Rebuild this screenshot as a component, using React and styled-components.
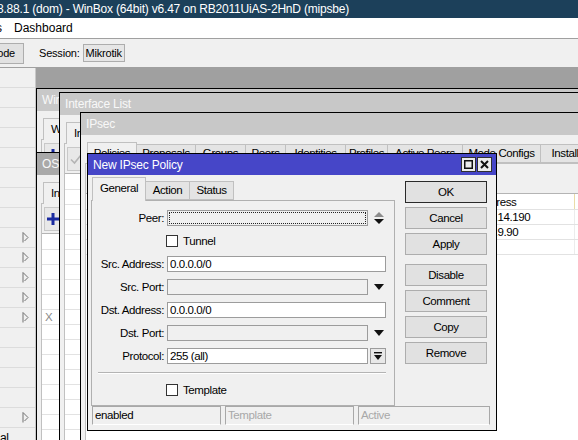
import React from 'react'
import styled, { createGlobalStyle } from 'styled-components'

const GlobalStyle = createGlobalStyle`
  html, body { margin: 0; padding: 0; background: #fff; }
  * { box-sizing: border-box; }
`

const Screen = styled.div`
  width: 578px;
  height: 440px;
  overflow: hidden;
  display: flex;
  flex-direction: column;
  background: #f0f0f0;
  font-family: "Liberation Sans", Arial, sans-serif;
  font-size: 11.5px;
  letter-spacing: -0.4px;
  color: #000;
`

const AppTitle = styled.div`
  flex: none;
  height: 18px;
  background: #1c405a;
  color: #fff;
  font-size: 12px;
  letter-spacing: -0.2px;
  line-height: 18px;
  white-space: nowrap;
  overflow: hidden;
  text-indent: -3px;
`

const MenuBar = styled.div`
  flex: none;
  height: 21px;
  display: flex;
  align-items: center;
  gap: 12px;
  background: #fff;
  border-bottom: 1px solid #a0a0a0;
  font-size: 12px;
  letter-spacing: 0;
  white-space: nowrap;
  overflow: hidden;
`

const MenuItem = styled.span`
  margin-left: ${p => p.$shift || 0}px;
`

const ToolBar = styled.div`
  flex: none;
  height: 29px;
  display: flex;
  align-items: center;
  background: #f0f0f0;
  border-bottom: 1px solid #a0a0a0;
  font-size: 11px;
  letter-spacing: -0.2px;
  white-space: nowrap;
  overflow: hidden;
`

const ModeButton = styled.div`
  flex: none;
  width: 64px;
  height: 21px;
  margin-left: -40px;
  padding-right: 8px;
  text-align: right;
  line-height: 19px;
  background: #e1e1e1;
  border: 1px solid #adadad;
`

const SessionLabel = styled.span`
  margin-left: 15px;
`

const SessionBox = styled.span`
  margin-left: 3px;
  height: 18px;
  line-height: 16px;
  padding: 0 2px;
  background: #e6e6e6;
  border: 1px solid #adadad;
`

const Main = styled.div`
  flex: 1;
  min-height: 0;
  display: flex;
`

const Sidebar = styled.div`
  flex: none;
  width: 36px;
  background: #f0f0f0;
  border-right: 1px solid #c8c8c8;
  overflow: hidden;
`

const SideRow = styled.div`
  height: 20px;
  display: flex;
  align-items: center;
  padding-left: ${p => (p.$text ? 0 : 22)}px;
  border-bottom: 1px solid #dcdcdc;
  font-size: 12px;
  white-space: nowrap;
`

const Workspace = styled.div`
  flex: 1;
  position: relative;
  overflow: hidden;
  background: #a0a0a0;
`

const Window = styled.div`
  position: absolute;
  z-index: 0;
  left: ${p => p.$x}px;
  top: ${p => p.$y}px;
  width: ${p => p.$w}px;
  height: ${p => p.$h}px;
  display: flex;
  flex-direction: column;
  background: #f0f0f0;
  border: 1px solid #000;
`

const WinTitle = styled.div`
  flex: none;
  height: 22px;
  padding-left: 5px;
  line-height: 22px;
  font-size: 12px;
  letter-spacing: -0.2px;
  color: #f8f8f8;
  background: ${p => (p.$dark ? '#a9a9a9' : '#c8c8c8')};
  white-space: nowrap;
`

const WinBody = styled.div`
  flex: 1;
  min-height: 0;
  display: flex;
  flex-direction: column;
  padding: 6px 4px 0;
`

const TabRow = styled.div`
  flex: none;
  height: ${p => p.$h || 22}px;
  display: flex;
  align-items: flex-end;
  padding-left: ${p => p.$pad ?? 2}px;
  white-space: nowrap;
`

const Tab = styled.div`
  flex: none;
  position: relative;
  height: ${p => (p.$active ? p.$tall || 22 : 19)}px;
  width: ${p => (p.$w ? `${p.$w}px` : 'auto')};
  padding: 0 ${p => (p.$w ? 0 : 7)}px;
  margin-right: -1px;
  margin-bottom: ${p => (p.$active ? -1 : 0)}px;
  z-index: ${p => (p.$active ? 1 : 0)};
  text-align: center;
  line-height: ${p => (p.$active ? 20 : 17)}px;
  background: ${p => (p.$active ? '#f0f0f0' : '#e4e4e4')};
  border: 1px solid #c0c0c0;
  border-bottom: ${p => (p.$active ? 'none' : '1px solid #c0c0c0')};
`

const TabPanel = styled.div`
  flex: 1;
  min-height: 0;
  display: flex;
  flex-direction: column;
  border: 1px solid #c0c0c0;
  border-bottom: none;
`

const PanelTools = styled.div`
  flex: none;
  height: 29px;
  display: flex;
  align-items: center;
  padding: 0 2px;
`

const ToolButton = styled.div`
  width: 18px;
  height: 24px;
  display: flex;
  align-items: center;
  justify-content: center;
  border: 1px solid #c8c8c8;
  background: #e8e8e8;
`

const DataTable = styled.div`
  flex: 1;
  background: #fff;
  border-top: 1px solid #b4b4b4;
`

const TableRow = styled.div`
  display: grid;
  grid-template-columns: ${p => p.$cols};
  height: ${p => (p.$head ? 16 : 15)}px;
  border-bottom: 1px solid #e2e2e2;
  white-space: nowrap;
`

const Cell = styled.div`
  overflow: hidden;
  padding-left: 3px;
  line-height: ${p => (p.$head ? 16 : 15)}px;
  color: ${p => (p.$muted ? '#8a8a8a' : '#000')};
  border-right: 1px solid ${p => (p.$head ? '#eadca8' : '#ececec')};
`

const Dialog = styled.div`
  position: absolute;
  left: 51px;
  top: 85px;
  width: 410px;
  height: 278px;
  display: flex;
  flex-direction: column;
  background: #f0f0f0;
  border: 1px solid #000;
  z-index: 5;
`

const DlgTitle = styled.div`
  flex: none;
  height: 21px;
  display: flex;
  align-items: center;
  justify-content: space-between;
  padding: 0 4px 0 5px;
  background: #4646c8;
  color: #fff;
  font-size: 12px;
  letter-spacing: -0.2px;
`

const TitleButtons = styled.div`
  display: flex;
  gap: 1px;
`

const TitleBtn = styled.div`
  width: 15px;
  height: 15px;
  display: flex;
  align-items: center;
  justify-content: center;
  background: #ececec;
  border: 1px solid #303030;
`

const DlgBody = styled.div`
  flex: 1;
  min-height: 0;
  display: flex;
  flex-direction: column;
  padding: 2px 3px 6px;
`

const DlgMain = styled.div`
  flex: 1;
  min-height: 0;
  display: flex;
  gap: 10px;
`

const LeftCol = styled.div`
  flex: none;
  width: 304px;
  display: flex;
  flex-direction: column;
`

const FormPanel = styled.div`
  flex: 1;
  padding: 9px 8px 0 0;
  border: 1px solid #b0b0b0;
  background: #f0f0f0;
`

const FormRow = styled.div`
  display: grid;
  grid-template-columns: 72px 1fr;
  column-gap: 3px;
  align-items: center;
  height: 16px;
  margin-bottom: 7px;
`

const Label = styled.div`
  text-align: right;
  white-space: nowrap;
`

const FieldLine = styled.div`
  display: flex;
  align-items: center;
  height: 16px;
`

const Input = styled.div`
  position: relative;
  flex: 1;
  height: 16px;
  padding-left: 2px;
  line-height: 14px;
  white-space: nowrap;
  background: ${p => (p.$disabled ? '#f0f0f0' : '#fff')};
  border: 1px solid #9c9c9c;

  ${p => p.$focus && `
    &::after {
      content: '';
      position: absolute;
      inset: 1px;
      border: 1px dotted #222;
    }
  `}
`

const ArrowSlot = styled.div`
  flex: none;
  width: 18px;
  display: flex;
  align-items: center;
  justify-content: flex-end;
  padding-right: 2px;
`

const ProtoBtn = styled.div`
  flex: none;
  width: 16px;
  height: 16px;
  margin-left: 2px;
  display: flex;
  align-items: center;
  justify-content: center;
  background: #e8e8e8;
  border: 1px solid #9c9c9c;
`

const CheckBox = styled.span`
  flex: none;
  width: 12px;
  height: 12px;
  margin-left: -1px;
  margin-right: 5px;
  background: #fff;
  border: 1px solid #333;
`

const Separator = styled.div`
  height: 2px;
  margin: 8px 0 8px 6px;
  border-top: 1px solid #b4b4b4;
  border-bottom: 1px solid #fff;
`

const ButtonCol = styled.div`
  flex: none;
  width: 82px;
  display: flex;
  flex-direction: column;
  gap: 4px;
  padding-top: 4px;
`

const DlgButton = styled.div`
  height: 22px;
  margin-top: ${p => (p.$gapTop ? 5 : 0)}px;
  text-align: center;
  line-height: 20px;
  background: #e1e1e1;
  border: 1px solid ${p => (p.$default ? '#2a2a2a' : '#adadad')};
`

const StatusBar = styled.div`
  flex: none;
  height: 18px;
  margin: 2px 3px 0 1px;
  display: grid;
  grid-template-columns: 129px 129px 1fr;
  gap: 4px;
`

const StatusCell = styled.div`
  padding-left: 2px;
  line-height: 17px;
  color: ${p => (p.$muted ? '#a8a8a8' : '#000')};
  border: 1px solid #a8a8a8;
  border-bottom-color: #fff;
`

const SideArrow = () => (
  <svg width="7" height="11" viewBox="0 0 7 11">
    <path d="M1 0.5 V10.5 M1 0.5 L6 5.5 L2.5 9" fill="none" stroke="#707070" strokeWidth="1" />
  </svg>
)

const PlusIcon = () => (
  <svg width="12" height="12" viewBox="0 0 12 12">
    <rect x="4.5" y="0" width="3" height="12" fill="#1a2ba0" />
    <rect x="0" y="4.5" width="12" height="3" fill="#1a2ba0" />
  </svg>
)

const CheckIcon = () => (
  <svg width="12" height="12" viewBox="0 0 12 12">
    <path d="M1 6.5 L4.5 10 L11 2" fill="none" stroke="#b4b4b4" strokeWidth="1.6" />
  </svg>
)

const UpDownIcon = () => (
  <svg width="10" height="12" viewBox="0 0 10 12">
    <polygon points="0,5 10,5 5,0" fill="#8c8c8c" />
    <polygon points="0,7 10,7 5,12" fill="#111" />
  </svg>
)

const DownIcon = () => (
  <svg width="10" height="6" viewBox="0 0 10 6">
    <polygon points="0,0 10,0 5,6" fill="#111" />
  </svg>
)

const BarDownIcon = () => (
  <svg width="8" height="8" viewBox="0 0 8 8">
    <rect x="0" y="0" width="8" height="1.4" fill="#111" />
    <polygon points="0,3 8,3 4,8" fill="#111" />
  </svg>
)

const MaxIcon = () => (
  <svg width="9" height="9" viewBox="0 0 9 9">
    <rect x="0.75" y="0.75" width="7.5" height="7.5" fill="none" stroke="#111" strokeWidth="1.5" />
  </svg>
)

const CloseIcon = () => (
  <svg width="9" height="9" viewBox="0 0 9 9">
    <path d="M1 1 L8 8 M8 1 L1 8" stroke="#111" strokeWidth="2" />
  </svg>
)

const sideRows = Array.from({ length: 19 }, (_, i) => ({
  arrow: [8, 9, 10, 11, 12, 17].includes(i),
  text: i === 18 ? 'al' : '',
}))

const ipsecTabs = [
  ['Policies', 50],
  ['Proposals', 60],
  ['Groups', 51],
  ['Peers', 41],
  ['Identities', 61],
  ['Profiles', 43],
  ['Active Peers', 76],
  ['Mode Configs', 79],
  ['Installed SAs', 85],
]

const ipsecCols = '24px 90px 50px 110px 93px 122px 1fr'
const ipsecHead = ['#', 'Peer', 'Tunnel', 'Src. Address', 'Src. Port', 'Dst. Address', 'Dst. Port']
const ipsecRows = [
  ['0', '', 'no', '192.168.1.0/24', '', '192.168.14.190', ''],
  ['1', '', 'no', '192.168.1.0/24', '', '192.168.9.90', ''],
  ['', '', '', '', '', '', ''],
]

const ospfCols = '20px 1fr'

const BgWindow = ({ x, y, w, h, title, dark, tab, tool, cols, rows }) => (
  <Window $x={x} $y={y} $w={w} $h={h}>
    <WinTitle $dark={dark}>{title}</WinTitle>
    <WinBody>
      <TabRow>
        <Tab $active>{tab}</Tab>
      </TabRow>
      <TabPanel>
        <PanelTools>
          <ToolButton>{tool}</ToolButton>
        </PanelTools>
        <DataTable>
          <TableRow $cols={cols} $head>
            <Cell $head />
            <Cell $head>Name</Cell>
          </TableRow>
          {rows.map((r, i) => (
            <TableRow key={i} $cols={cols}>
              <Cell $muted>{r}</Cell>
              <Cell />
            </TableRow>
          ))}
        </DataTable>
      </TabPanel>
    </WinBody>
  </Window>
)

const FormField = ({ label, value, disabled, focus, slot }) => (
  <FormRow>
    <Label>{label}</Label>
    <FieldLine>
      <Input $disabled={disabled} $focus={focus}>{value}</Input>
      {slot}
    </FieldLine>
  </FormRow>
)

const CheckRow = ({ label }) => (
  <FormRow>
    <span />
    <FieldLine>
      <CheckBox />
      {label}
    </FieldLine>
  </FormRow>
)

const App = () => {
  return (
    <Screen>
      <GlobalStyle />
      <AppTitle>8.88.1 (dom) - WinBox (64bit) v6.47 on RB2011UiAS-2HnD (mipsbe)</AppTitle>
      <MenuBar>
        <MenuItem $shift={-26}>Tools</MenuItem>
        <MenuItem>Dashboard</MenuItem>
      </MenuBar>
      <ToolBar>
        <ModeButton>Safe Mode</ModeButton>
        <SessionLabel>Session:</SessionLabel>
        <SessionBox>Mikrotik</SessionBox>
      </ToolBar>
      <Main>
        <Sidebar>
          {sideRows.map((r, i) => (
            <SideRow key={i} $text={!!r.text}>
              {r.arrow && <SideArrow />}
              {r.text}
            </SideRow>
          ))}
        </Sidebar>
        <Workspace>
          <BgWindow
            x={0} y={20} w={600} h={400}
            title="Wireless Tables" tab="WiFi Interfaces"
            tool={<PlusIcon />} cols={ospfCols} rows={['', '', '']}
          />
          <BgWindow
            x={0} y={84} w={80} h={330} dark
            title="OSPF" tab="Instances"
            tool={<PlusIcon />} cols={ospfCols}
            rows={['', '', '', '', 'X', '', '', '', '', '', '', '', '', '', '']}
          />
          <BgWindow
            x={23} y={24} w={560} h={400}
            title="Interface List" tab="Interface"
            tool={<CheckIcon />} cols={ospfCols} rows={Array(18).fill('')}
          />

          <Window $x={44} $y={44} $w={560} $h={400}>
            <WinTitle>IPsec</WinTitle>
            <WinBody>
              <TabRow>
                {ipsecTabs.map(([t, w], i) => (
                  <Tab key={t} $w={w} $active={i === 0}>{t}</Tab>
                ))}
              </TabRow>
              <TabPanel>
                <PanelTools />
                <DataTable>
                  <TableRow $cols={ipsecCols} $head>
                    {ipsecHead.map(h => (
                      <Cell key={h} $head>{h}</Cell>
                    ))}
                  </TableRow>
                  {ipsecRows.map((r, i) => (
                    <TableRow key={i} $cols={ipsecCols}>
                      {r.map((c, j) => (
                        <Cell key={j}>{c}</Cell>
                      ))}
                    </TableRow>
                  ))}
                </DataTable>
              </TabPanel>
            </WinBody>
          </Window>

          <Dialog>
            <DlgTitle>
              <span>New IPsec Policy</span>
              <TitleButtons>
                <TitleBtn><MaxIcon /></TitleBtn>
                <TitleBtn><CloseIcon /></TitleBtn>
              </TitleButtons>
            </DlgTitle>
            <DlgBody>
              <DlgMain>
                <LeftCol>
                  <TabRow $h={23} $pad={1}>
                    <Tab $active $tall={24} $w={54}>General</Tab>
                    <Tab $w={45}>Action</Tab>
                    <Tab $w={45}>Status</Tab>
                  </TabRow>
                  <FormPanel>
                    <FormField label="Peer:" value="" disabled focus slot={<ArrowSlot><UpDownIcon /></ArrowSlot>} />
                    <CheckRow label="Tunnel" />
                    <FormField label="Src. Address:" value="0.0.0.0/0" />
                    <FormField label="Src. Port:" value="" disabled slot={<ArrowSlot><DownIcon /></ArrowSlot>} />
                    <FormField label="Dst. Address:" value="0.0.0.0/0" />
                    <FormField label="Dst. Port:" value="" disabled slot={<ArrowSlot><DownIcon /></ArrowSlot>} />
                    <FormField label="Protocol:" value="255 (all)" slot={<ProtoBtn><BarDownIcon /></ProtoBtn>} />
                    <Separator />
                    <CheckRow label="Template" />
                  </FormPanel>
                </LeftCol>
                <ButtonCol>
                  <DlgButton $default>OK</DlgButton>
                  <DlgButton>Cancel</DlgButton>
                  <DlgButton>Apply</DlgButton>
                  <DlgButton $gapTop>Disable</DlgButton>
                  <DlgButton>Comment</DlgButton>
                  <DlgButton>Copy</DlgButton>
                  <DlgButton>Remove</DlgButton>
                </ButtonCol>
              </DlgMain>
              <StatusBar>
                <StatusCell>enabled</StatusCell>
                <StatusCell $muted>Template</StatusCell>
                <StatusCell $muted>Active</StatusCell>
              </StatusBar>
            </DlgBody>
          </Dialog>
        </Workspace>
      </Main>
    </Screen>
  )
}

export default App
